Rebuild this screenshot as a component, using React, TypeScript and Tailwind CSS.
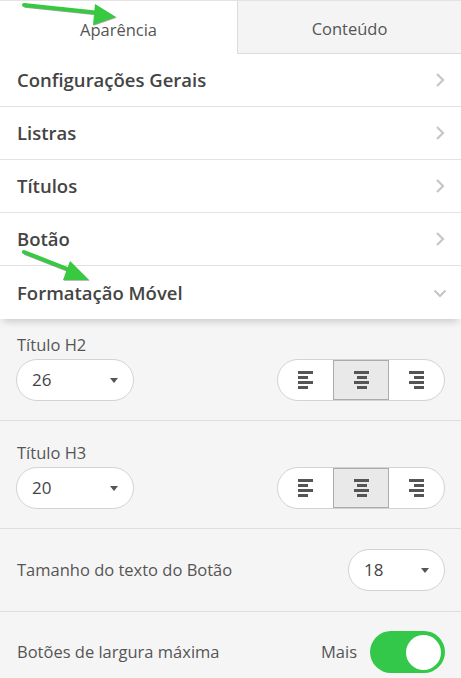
import type { ReactNode } from 'react';

type Align = 'left' | 'center' | 'right';

const font = { fontFamily: '"Open Sans", "Noto Sans", sans-serif' };

function Chevron({ down = false }: { down?: boolean }) {
  return (
    <svg width="14" height="14" viewBox="0 0 14 14" className="text-[#c6c6c6]">
      {down ? (
        <path d="M1.5 4.5l5.5 5.5 5.5-5.5" fill="none" stroke="currentColor" strokeWidth="2.2" />
      ) : (
        <path d="M4 1l6 6-6 6" fill="none" stroke="currentColor" strokeWidth="2.2" />
      )}
    </svg>
  );
}

function AlignIcon({ align }: { align: Align }) {
  const short = (y: number) => {
    const x = align === 'left' ? 0 : align === 'center' ? 3 : 5;
    return <rect x={x} y={y} width="10" height="3" />;
  };
  return (
    <svg width="15" height="18" viewBox="0 0 15 18" className="fill-[#555]">
      <rect x="0" y="0" width="15" height="3" />
      {short(5)}
      <rect x="0" y="10" width="15" height="3" />
      {short(15)}
    </svg>
  );
}

function Select({ value, width }: { value: string; width: string }) {
  return (
    <div
      className={`flex h-[42px] ${width} items-center justify-between rounded-full border border-[#d3d3d3] bg-white pl-[15px] pr-[15px] text-[17px] text-[#444]`}
    >
      <span>{value}</span>
      <span className="h-0 w-0 border-x-[4px] border-t-[5px] border-x-transparent border-t-[#555]" />
    </div>
  );
}

function AlignGroup() {
  const items: Align[] = ['left', 'center', 'right'];
  return (
    <div className="flex h-[42px] w-[168px] overflow-hidden rounded-full border border-[#d3d3d3] bg-white">
      {items.map((a) => (
        <div
          key={a}
          className={
            a === 'center'
              ? 'flex flex-1 items-center justify-center border border-[#ababab] bg-[#e9e9e9]'
              : 'flex flex-1 items-center justify-center'
          }
        >
          <AlignIcon align={a} />
        </div>
      ))}
    </div>
  );
}

function MenuRow({ label, open = false }: { label: string; open?: boolean }) {
  return (
    <div
      className={
        open
          ? 'relative z-10 flex h-[53px] items-center justify-between bg-white px-[17px] shadow-[0_5px_8px_-3px_rgba(0,0,0,0.2)]'
          : 'flex h-[53px] items-center justify-between border-b border-[#e2e2e2] bg-white px-[17px]'
      }
    >
      <span className="text-[18.5px] leading-[24px] font-semibold text-[#444]">{label}</span>
      <span className="mr-[-3px]">
        <Chevron down={open} />
      </span>
    </div>
  );
}

function HeadingBlock({ label, value, top }: { label: string; value: string; top: string }) {
  return (
    <div className={`border-b border-[#dedede] px-[16px] ${top} pb-[19px]`}>
      <div className="mb-[3px] pl-px text-[16.5px] leading-[22px] text-[#555]">{label}</div>
      <div className="flex items-center justify-between">
        <Select value={value} width="w-[118px]" />
        <AlignGroup />
      </div>
    </div>
  );
}

function Arrow({ className, children }: { className: string; children: ReactNode }) {
  return (
    <svg className={`pointer-events-none absolute z-20 ${className}`} width="120" height="40" viewBox="0 0 120 40">
      {children}
    </svg>
  );
}

export default function App() {
  return (
    <div className="relative h-[678px] w-[461px] overflow-hidden bg-[#f5f5f5]" style={font}>
      <div className="flex h-[54px] border-t border-[#e3e3e3] text-[16.5px] text-[#555]">
        <div className="flex w-[237px] items-center justify-center bg-white pt-[5px]">Aparência</div>
        <div className="flex flex-1 items-center justify-center border-b border-l border-[#dcdcdc] bg-[#f4f4f4] pt-[5px]">
          Conteúdo
        </div>
      </div>

      <MenuRow label="Configurações Gerais" />
      <MenuRow label="Listras" />
      <MenuRow label="Títulos" />
      <MenuRow label="Botão" />
      <MenuRow label="Formatação Móvel" open />

      <HeadingBlock label="Título H2" value="26" top="pt-[15px]" />
      <HeadingBlock label="Título H3" value="20" top="pt-[21px]" />

      <div className="flex items-center justify-between border-b border-[#dedede] px-[16px] py-[20px]">
        <span className="pl-px text-[16.5px] text-[#555]">Tamanho do texto do Botão</span>
        <Select value="18" width="w-[97px]" />
      </div>

      <div className="flex items-center justify-between px-[16px] pt-[19px]">
        <span className="pl-px text-[16.5px] text-[#555]">Botões de largura máxima</span>
        <div className="flex items-center gap-[13px]">
          <span className="text-[16.5px] text-[#555]">Mais</span>
          <div className="flex h-[42px] w-[75px] items-center justify-end rounded-full bg-[#34c84a] pr-[4px]">
            <div className="h-[35px] w-[35px] rounded-full bg-white" />
          </div>
        </div>
      </div>

      <Arrow className="left-[20px] top-0">
        <g transform="translate(0.6 0.8)" opacity="0.35">
          <path d="M4 5 L80 13" stroke="#000" strokeWidth="4" />
          <path d="M75 4 L96 17 L73 25 Z" fill="#000" />
        </g>
        <path d="M4 5 L80 13" stroke="#37c940" strokeWidth="4" strokeLinecap="round" />
        <path d="M75 4 L96 17 L73 25 Z" fill="#37c940" />
      </Arrow>
      <Arrow className="left-[20px] top-[248px]">
        <g transform="translate(0.6 0.8)" opacity="0.35">
          <path d="M4 4 L55 24" stroke="#000" strokeWidth="4" />
          <path d="M50 13 L69 32 L43 32 Z" fill="#000" />
        </g>
        <path d="M4 4 L55 24" stroke="#37c940" strokeWidth="4" strokeLinecap="round" />
        <path d="M50 13 L69 32 L43 32 Z" fill="#37c940" />
      </Arrow>
    </div>
  );
}
